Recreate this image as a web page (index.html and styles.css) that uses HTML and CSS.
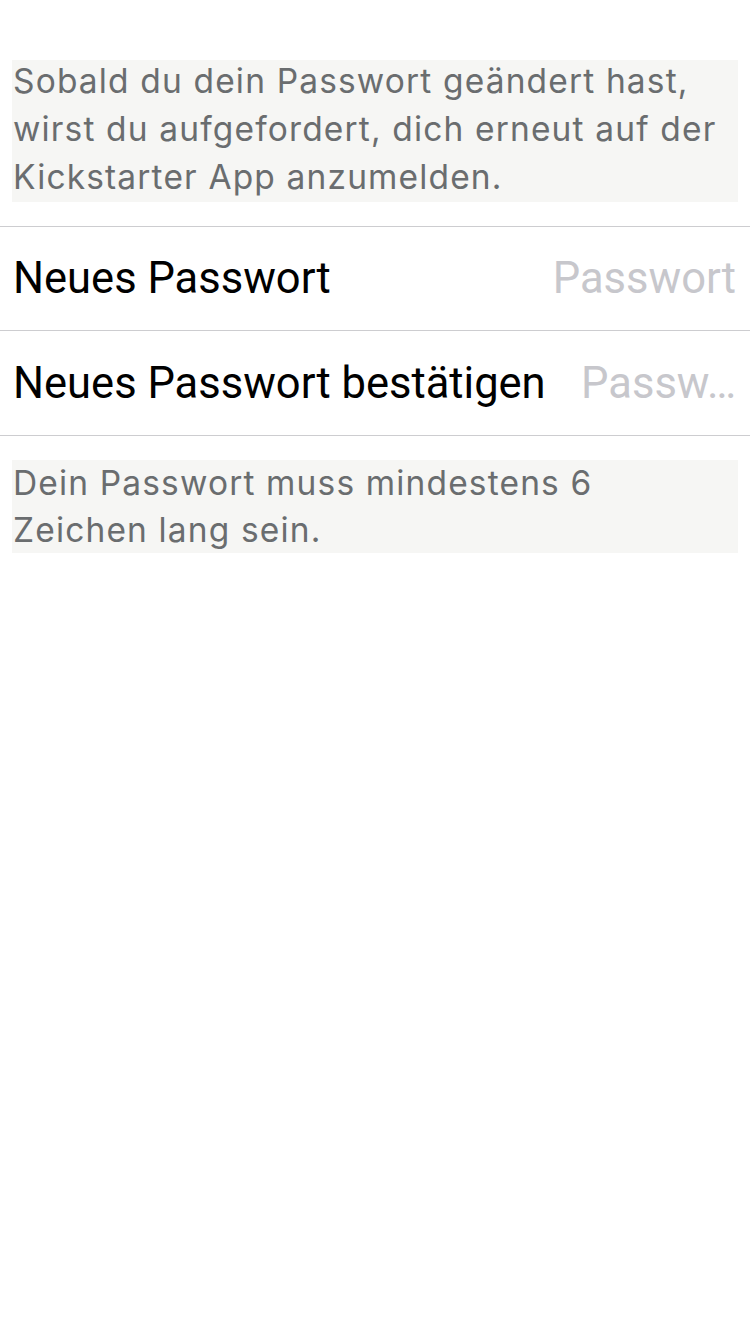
FILE: index.html
```html
<!DOCTYPE html>
<html lang="de">
<head>
<meta charset="utf-8">
<link rel="stylesheet" href="styles.css">
</head>
<body>
<div class="page">
  <div class="note note-top">
    <p class="note-text">Sobald du dein Passwort geändert hast, wirst du aufgefordert, dich erneut auf der Kickstarter App anzumelden.</p>
  </div>
  <div class="form">
    <div class="row">
      <span class="label">Neues Passwort</span>
      <span class="placeholder">Passwort</span>
    </div>
    <div class="row">
      <span class="label">Neues Passwort bestätigen</span>
      <span class="placeholder">Passw…</span>
    </div>
  </div>
  <div class="note note-bottom">
    <p class="note-text">Dein Passwort muss mindestens 6 Zeichen lang sein.</p>
  </div>
</div>
</body>
</html>
```
FILE: styles.css
```css
html, body {
  margin: 0;
  padding: 0;
  background: #ffffff;
}
.page {
  width: 750px;
  height: 1334px;
  padding-top: 60px;
  box-sizing: border-box;
  font-family: Roboto, "Liberation Sans", sans-serif;
}
.note {
  display: flow-root;
  margin: 0 12px;
  padding-left: 1px;
  background: #f6f6f4;
  color: #6a6d6f;
  font-family: Inter, Roboto, sans-serif;
  font-size: 33.5px;
  letter-spacing: 1.15px;
}
.note-text {
  margin: 0;
}
.note-top {
  height: 142px;
  line-height: 48px;
}
.note-top .note-text {
  margin-top: -3px;
}
.form {
  margin-top: 24px;
  border-top: 1px solid #cdcdd0;
}
.row {
  display: flex;
  align-items: center;
  justify-content: space-between;
  gap: 28px;
  height: 104px;
  padding: 0 14px 0 13px;
  border-bottom: 1px solid #cdcdd0;
  font-size: 43.5px;
}
.row:first-child {
  height: 103px;
}
.label {
  color: #000000;
  white-space: nowrap;
}
.placeholder {
  color: #c7c7cc;
  white-space: nowrap;
}
.note-bottom {
  margin-top: 24px;
  height: 93px;
  line-height: 47px;
}
```
